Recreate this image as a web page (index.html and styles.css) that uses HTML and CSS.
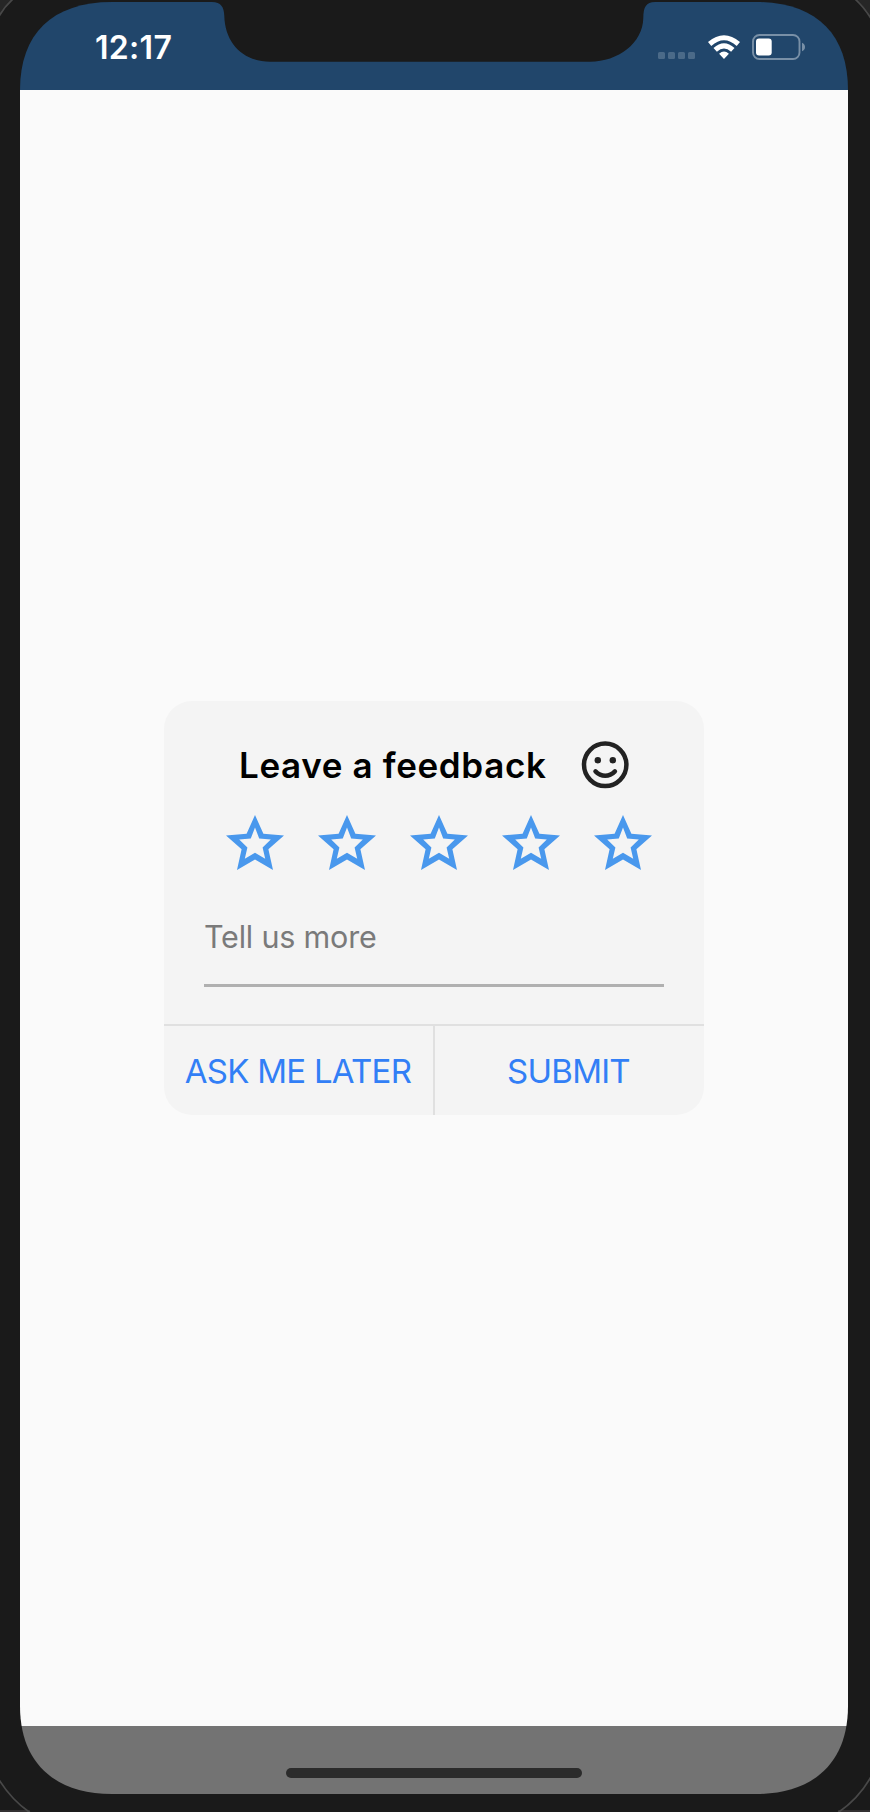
FILE: index.html
```html
<!DOCTYPE html>
<html lang="en">
<head>
<meta charset="utf-8">
<title>Leave a feedback</title>
<link rel="stylesheet" href="styles.css">
</head>
<body>
<div class="device">
  <svg class="bezel" viewBox="0 0 870 1812" aria-hidden="true">
    <path d="M0 0H12Q5 7 0 15ZM870 0H856Q864 8 870 18Z" fill="#262626"/>
    <path d="M0 1811.500H30M838 1811.500H870" stroke="#333031" stroke-width="3"/>
    <path d="M-2 18Q4 7 13 -1M855 -1Q864 7 872 20M-2 1778Q11 1800 32 1814M836 1814Q859 1799 872 1775" fill="none" stroke="#484848" stroke-width="1.7"/>
  </svg>
  <main class="screen">
    <header class="status">
      <time class="time">12:17</time>
      <svg class="notch" viewBox="0 0 436 62" aria-hidden="true"><path d="M0 0V2C9 2 12 7 12.300 16C13 43 31 61.700 58 61.700H378C406 61.700 431 43 431.300 18C431.500 7 434 2 443 2V0Z" fill="#1a1a1a"/></svg>
      <div class="indicators">
        <span class="signal"><i></i><i></i><i></i><i></i></span>
        <svg class="wifi" viewBox="0 0 32 24" aria-hidden="true"><path d="M0 7.100Q16-6.500 32 7.100L28.700 11.100Q16-.5 3.300 11.100ZM5.500 12.900Q16 3.500 26.500 12.900L23.100 16.800Q16 10.300 8.900 16.800ZM11.100 18.700Q16 14.400 20.900 18.700L16 23.900Z" fill="#fff"/></svg>
        <svg class="battery" viewBox="0 0 54 26" aria-hidden="true"><rect x="1" y="1" width="46.500" height="24" rx="6.500" fill="none" stroke="#7990a7" stroke-width="1.900"/><rect x="4" y="4.500" width="15.700" height="17" rx="3" fill="#fff"/><path d="M50 8.700Q53 10 53 13T50 17.300Z" fill="#7990a7"/></svg>
      </div>
    </header>
    <div class="content">
      <section class="dialog">
        <div class="heading">
          <h1>Leave a feedback</h1>
          <svg class="smile" viewBox="0 0 48 48" aria-hidden="true"><g fill="none" stroke="#222" stroke-width="4.500"><circle cx="24.200" cy="23.800" r="21.200"/><path d="M14.500 30.400C20.200 36.300 28.200 36.300 33.900 30.400" stroke-linecap="round"/></g><circle cx="16.800" cy="19.200" r="3.200" fill="#222"/><circle cx="31.800" cy="19.200" r="3.200" fill="#222"/></svg>
        </div>
        <div class="stars">
          <svg viewBox="0 0 58 55"><use href="#star"/></svg>
          <svg viewBox="0 0 58 55"><use href="#star"/></svg>
          <svg viewBox="0 0 58 55"><use href="#star"/></svg>
          <svg viewBox="0 0 58 55"><use href="#star"/></svg>
          <svg viewBox="0 0 58 55"><use href="#star"/></svg>
        </div>
        <div class="field"><span>Tell us more</span></div>
        <div class="actions">
          <button class="later">ASK ME LATER</button>
          <button class="submit">SUBMIT</button>
        </div>
      </section>
    </div>
    <footer class="home"><span></span></footer>
  </main>
</div>
<svg class="defs" aria-hidden="true"><defs><path id="star" fill="#4998ed" fill-rule="evenodd" d="M29 0L37.400 18.700L58 20.600L42.400 34.200L47 55L29 44.500L11 55L15.600 34.200L0 20.600L20.600 18.700ZM29 12.600L24.800 23.600L13.200 24.500L21.400 32.500L18.800 43.700L29 37.700L39.200 43.700L36.600 32.500L44.800 24.500L33.200 23.600Z"/></defs></svg>
</body>
</html>
```
FILE: styles.css
```css
* { box-sizing: border-box; }
body { margin: 0; background: #1a1a1a; font-family: Inter, "Liberation Sans", sans-serif; }
.device { position: relative; height: 1812px; padding: 2px 22px 18px 20px; overflow: hidden; }
.bezel { position: absolute; inset: 0; width: 870px; height: 1812px; }
.defs { display: block; width: 0; height: 0; }
.screen {
  position: relative; display: flex; flex-direction: column; height: 1792px;
  clip-path: path("M0 88C0 32 32 0 92 0H736C796 0 828 32 828 88V1704C828 1760 794 1792 736 1792H92C34 1792 0 1760 0 1704Z");
}
.status { position: relative; display: flex; justify-content: space-between; height: 88px; padding: 0 42px 0 75px; background: #21466b; }
.time { margin-top: 27px; font-size: 32px; line-height: 38px; font-weight: 600; letter-spacing: .3px; color: #fff; }
.notch { position: absolute; left: 192px; top: -2px; width: 436px; height: 62px; overflow: visible; }
.indicators { display: flex; align-items: flex-start; margin-top: 32px; }
.signal { display: flex; gap: 3px; margin: 18px 13px 0 0; }
.signal i { width: 7px; height: 7px; border-radius: 1.500px; background: #4b6a88; }
.wifi { width: 32px; height: 24px; margin: 1px 12px 0 0; }
.battery { width: 54px; height: 26px; }
.content { flex: 1; padding: 611px 144px 0; background: #fafafa; }
.dialog { display: flex; flex-direction: column; height: 414px; border-radius: 28px; overflow: hidden; background: #f4f4f4; }
.heading { display: flex; align-items: center; justify-content: space-between; height: 48px; margin: 39.500px 75px 0 75px; }
h1 { margin: 0; font-size: 35px; line-height: 48px; font-weight: 600; letter-spacing: .64px; color: #000; white-space: nowrap; }
.smile { width: 48px; height: 48px; }
.stars { display: flex; justify-content: space-between; margin: 26.500px 52px 0 62px; }
.stars svg { width: 58px; height: 55px; }
.field { height: 83px; margin: 33.500px 40px 0; padding-top: 12px; border-bottom: 3px solid #b0b0b0; font-size: 30.500px; line-height: 42px; letter-spacing: -.2px; color: #7a7a7a; }
.actions { display: flex; margin-top: auto; height: 91px; border-top: 2px solid #e0e0e0; }
button { width: 270px; padding: 0; border: 0; background: none; font: 400 33px/40px Inter, "Liberation Sans", sans-serif; letter-spacing: -.75px; color: #327ff6; }
.later { width: 271px; padding-right: 1px; border-right: 2px solid #e0e0e0; }
.submit { width: 269px; padding-right: 2px; }
.home { display: flex; justify-content: center; height: 68px; padding-top: 42px; background: #737373; }
.home span { width: 296px; height: 10px; border-radius: 5px; background: #2b2b2b; }
```
